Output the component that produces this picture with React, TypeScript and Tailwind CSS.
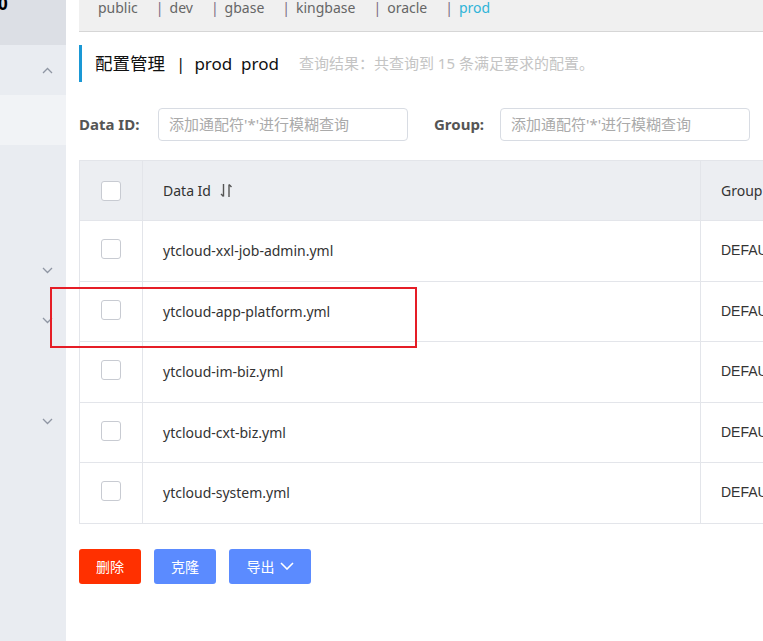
const tabs = ["public", "dev", "gbase", "kingbase", "oracle", "prod"]

const rows = [
  "ytcloud-xxl-job-admin.yml",
  "ytcloud-app-platform.yml",
  "ytcloud-im-biz.yml",
  "ytcloud-cxt-biz.yml",
  "ytcloud-system.yml",
]

const Chevron = ({ up = false, className = "" }: { up?: boolean; className?: string }) => (
  <svg width="11" height="7" viewBox="0 0 11 7" className={className}>
    <polyline
      points={up ? "1,6 5.5,1.5 10,6" : "1,1 5.5,5.5 10,1"}
      fill="none"
      stroke="#8f96a3"
      strokeWidth="1.3"
    />
  </svg>
)

const Checkbox = () => (
  <div className="w-[20px] h-[20px] rounded-[3px] border border-[#c8cbd2] bg-white" />
)

export default function App() {
  return (
    <div
      className="relative w-[763px] h-[641px] overflow-hidden flex bg-white"
      style={{ fontFamily: '"Noto Sans", "Noto Sans CJK SC", sans-serif' }}
    >
      {/* sidebar */}
      <div className="w-[66px] shrink-0 flex flex-col bg-[#e9ecf1]">
        <div className="h-[45px] bg-[#dcdfe5] relative">
          <span className="absolute -left-[2px] -top-[5px] text-[17px] font-bold text-black leading-none">0</span>
        </div>
        <div className="h-[50px] flex items-center justify-end pr-[13px]">
          <Chevron up />
        </div>
        <div className="h-[50px] bg-[#f1f3f6]" />
        <div className="h-[120px]" />
        <div className="h-[10px] flex items-center justify-end pr-[13px]">
          <Chevron />
        </div>
        <div className="h-[40px]" />
        <div className="h-[10px] flex items-center justify-end pr-[13px]">
          <Chevron />
        </div>
        <div className="h-[91px]" />
        <div className="h-[10px] flex items-center justify-end pr-[13px]">
          <Chevron />
        </div>
      </div>

      {/* main */}
      <div className="flex-1 pl-[13px] min-w-0">
        <div className="w-[900px]">
          {/* env tabs */}
          <div className="h-[32px] bg-[#f0f0f0] border-b border-[#d6d6d6] flex items-start pl-[19px] text-[14px] leading-[16px]">
            {tabs.map((t, i) => (
              <div key={t} className="flex">
                {i > 0 && <span className="text-[#7b6a82] pl-[18px] pr-[6px]">|</span>}
                <span className={t === "prod" ? "text-[#2fb4d8]" : "text-[#666]"}>{t}</span>
              </div>
            ))}
          </div>

          {/* title */}
          <div className="mt-[13px] h-[37px] border-l-[3px] border-[#1a98d5] flex items-center pl-[13px]">
            <span className="text-[17.5px] text-[#111]">配置管理</span>
            <span className="text-[17px] text-[#111] ml-[11px]">|</span>
            <span className="text-[17px] text-[#111] ml-[9px]">prod&nbsp;&nbsp;prod</span>
            <span className="text-[15px] text-[#c4c4c4] ml-[20px]">查询结果：共查询到 15 条满足要求的配置。</span>
          </div>

          {/* search */}
          <div className="mt-[26px] flex items-center h-[33px]">
            <span className="text-[15px] font-bold text-[#555] w-[79px]">Data ID:</span>
            <div className="w-[250px] h-[33px] border border-[#d8dce3] rounded-[4px] flex items-center pl-[10px] text-[15px] text-[#aaa]">
              添加通配符'*'进行模糊查询
            </div>
            <span className="text-[15px] font-bold text-[#555] ml-[26px] w-[66px]">Group:</span>
            <div className="w-[250px] h-[33px] border border-[#d8dce3] rounded-[4px] flex items-center pl-[10px] text-[15px] text-[#aaa]">
              添加通配符'*'进行模糊查询
            </div>
          </div>

          {/* table */}
          <div className="mt-[19px] border-l border-t border-[#e3e5ea]">
            <div className="flex h-[60px] bg-[#eceef2] border-b border-[#e3e5ea]">
              <div className="w-[63px] shrink-0 border-r border-[#e3e5ea] flex items-center justify-center">
                <Checkbox />
              </div>
              <div className="w-[558px] shrink-0 border-r border-[#e3e5ea] flex items-center pl-[20px] text-[14px] text-[#333]">
                Data Id
                <svg width="13" height="15" viewBox="0 0 13 15" className="ml-[9px]">
                  <path d="M3.5 1 V13.5 M1 11 L3.5 13.5" stroke="#555" strokeWidth="1.4" fill="none" />
                  <path d="M9 14 V1.5 M9 1.5 L11.5 4" stroke="#555" strokeWidth="1.4" fill="none" />
                </svg>
              </div>
              <div className="flex-1 flex items-center pl-[20px] text-[14px] text-[#333]">Group</div>
            </div>
            {rows.map((r) => (
              <div key={r} className="flex h-[60.5px] border-b border-[#e3e5ea]">
                <div className="w-[63px] shrink-0 border-r border-[#e3e5ea] flex items-center justify-center -mt-[3px]">
                  <Checkbox />
                </div>
                <div className="w-[558px] shrink-0 border-r border-[#e3e5ea] flex items-center pl-[20px] text-[14px] text-[#333]">
                  {r}
                </div>
                <div
                  className="flex-1 flex items-center pl-[20px] text-[14px] text-[#333]"
                  style={{ fontFamily: '"Liberation Sans", Arial, sans-serif' }}
                >
                  DEFAULT_GROUP
                </div>
              </div>
            ))}
          </div>

          {/* actions */}
          <div className="mt-[25px] flex gap-[13px]">
            <button className="w-[62px] h-[35px] rounded-[3px] bg-[#ff3000] text-white text-[14px]">删除</button>
            <button className="w-[62px] h-[35px] rounded-[3px] bg-[#5b8bff] text-white text-[14px]">克隆</button>
            <button className="w-[82px] h-[35px] rounded-[3px] bg-[#5b8bff] text-white text-[14px] flex items-center justify-center gap-[5px]">
              导出
              <svg width="14" height="8" viewBox="0 0 14 8">
                <polyline points="1,1 7,7 13,1" fill="none" stroke="white" strokeWidth="1.6" />
              </svg>
            </button>
          </div>
        </div>
      </div>

      {/* annotation */}
      <div className="absolute left-[50px] top-[287px] w-[367px] h-[61px] border-2 border-[#e51d26]" />
    </div>
  )
}
